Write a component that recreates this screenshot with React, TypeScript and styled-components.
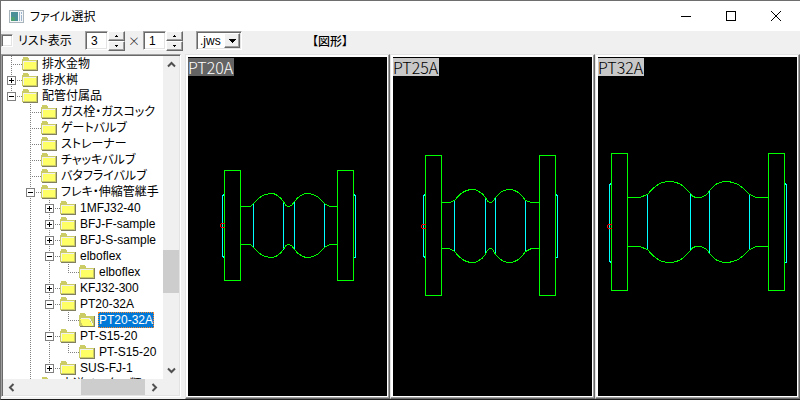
import React from "react";
import styled, { createGlobalStyle, css } from "styled-components";

const Global = createGlobalStyle`
  * { box-sizing: border-box; }
  body { margin: 0; background: #1e1e1e; }
  body, button, input, select {
    font-family: "Liberation Sans", "Noto Sans CJK JP", sans-serif;
    font-size: 12px;
    color: #000;
  }
  button { padding: 0; border: 0; }
`;

const Window = styled.main`
  display: grid;
  grid-template-rows: 30px 23px minmax(0, 1fr);
  height: 100vh;
  border: 1px solid #6e6e6e;
  border-right: 0;
  border-bottom-color: #1e1e1e;
  background: #f0f0f0;
  overflow: hidden;
`;

const TitleBar = styled.header`
  display: flex;
  align-items: center;
  padding: 0 2px 0 8px;
  background: #fff;
`;

const Title = styled.h1`
  flex: 1;
  margin: 0 0 0 6px;
  font: 400 12px/20px "Noto Sans CJK JP", sans-serif;
  font-feature-settings: "palt";
`;

const CaptionButton = styled.button`
  display: grid;
  place-items: center;
  width: 45px;
  height: 30px;
  background: transparent;
`;

const Toolbar = styled.div`
  display: flex;
  align-items: flex-start;
  font-feature-settings: "palt";
`;

const CheckLabel = styled.label`
  display: flex;
  align-items: center;
  gap: 5px;
  width: 84px;
  height: 16px;
  white-space: nowrap;
`;

const sunken = css`
  border: 1px solid;
  border-color: #a0a0a0 #fff #fff #a0a0a0;
  box-shadow: inset 1px 1px #696969, inset -1px -1px #e3e3e3;
`;

const raised = css`
  background: #f0f0f0;
  border: 1px solid;
  border-color: #fff #696969 #696969 #fff;
  box-shadow: inset -1px -1px #a0a0a0;
`;

const Check = styled.input`
  appearance: none;
  width: 12px;
  height: 13px;
  margin: 2px 0 0;
  background: #fff;
  ${sunken}
  &:checked { background: #0078d7; }
`;

const Spin = styled.div`
  display: flex;
  height: 20px;
`;

const NumberBox = styled.input`
  width: 23px;
  height: 19px;
  padding: 0 0 0 5px;
  background: #fff;
  ${sunken}
`;

const SpinButtons = styled.div`
  display: grid;
  grid-template-rows: 1fr 1fr;
  width: 17px;
`;

const SpinButton = styled.button`
  display: grid;
  place-items: center;
  ${raised}
`;

const Times = styled.span`
  width: 18px;
  font: 300 12px/20px "Noto Sans CJK JP", sans-serif;
  text-align: center;
`;

const Combo = styled.div`
  display: grid;
  grid-template-columns: 1fr 18px;
  width: 46px;
  height: 19px;
  margin-left: 13px;
  background: #fff;
  ${sunken}
`;

const Select = styled.select`
  grid-area: 1 / 1 / 2 / 3;
  appearance: none;
  padding: 0 0 0 3px;
  border: 0;
  background: transparent;
`;

const ComboArrow = styled.span`
  grid-area: 1 / 2;
  display: grid;
  place-items: center;
  margin: 1px;
  pointer-events: none;
  ${raised}
`;

const Caption = styled.strong`
  margin-left: 70px;
  font-weight: 500;
  line-height: 22px;
`;

const Body = styled.div`
  display: grid;
  grid-template: minmax(0, 1fr) / 180px minmax(0, 1fr);
  column-gap: 4px;
  min-height: 0;
`;

const TreePane = styled.nav`
  display: grid;
  grid-template: minmax(0, 1fr) 16px / minmax(0, 1fr) 16px;
  padding: 1px;
  margin-bottom: 2px;
  background: #f0f0f0;
  ${sunken}
`;

const Tree = styled.ul`
  margin: 0;
  padding: 0;
  list-style: none;
  overflow: hidden;
  background: #fff;
`;

const Row = styled.li`
  display: flex;
  align-items: center;
  height: 16px;
  white-space: nowrap;
`;

const dotsDown = "repeating-linear-gradient(#808080 0 1px, transparent 1px 2px)";
const dotsRight = "repeating-linear-gradient(90deg, #808080 0 1px, transparent 1px 2px)";

type GuideKind = "line" | "blank" | "tee" | "elbow";

const guides: Record<GuideKind, string> = {
  line: `${dotsDown} 8px 0 / 1px 16px no-repeat`,
  blank: "none",
  tee: `${dotsDown} 8px 0 / 1px 16px no-repeat, ${dotsRight} 8px 8px / 11px 1px no-repeat`,
  elbow: `${dotsDown} 8px 0 / 1px 8px no-repeat, ${dotsRight} 8px 8px / 11px 1px no-repeat`,
};

const Guide = styled.span<{ $kind: GuideKind }>`
  flex: 0 0 19px;
  height: 16px;
  padding: 4px 0 0 4px;
  background: ${(p) => guides[p.$kind]};
`;

const Toggle = styled.button<{ $open: boolean }>`
  display: block;
  width: 9px;
  height: 9px;
  border: 1px solid #808080;
  background:
    linear-gradient(#000, #000) 1px 3px / 5px 1px no-repeat,
    linear-gradient(#000, #000) 3px 1px / 1px ${(p) => (p.$open ? "0" : "5px")} no-repeat,
    #fff;
`;

const Name = styled.span<{ $selected: boolean }>`
  margin-left: 3px;
  padding: 0 1px;
  line-height: 16px;
  font-feature-settings: "palt";
  ${(p) =>
    p.$selected &&
    css`
      color: #fff;
      background: #0078d7;
      outline: 1px dotted #ff8728;
      outline-offset: -1px;
    `}
`;

const ScrollBar = styled.div<{ $vertical?: boolean }>`
  display: flex;
  flex-direction: ${(p) => (p.$vertical ? "column" : "row")};
  background: #f0f0f0;
`;

const ScrollButton = styled.button`
  display: grid;
  place-items: center;
  flex: 0 0 17px;
  background: transparent;
`;

const Space = styled.span<{ $grow: number }>`
  flex: ${(p) => p.$grow} 1 0;
`;

const Thumb = styled.span<{ $grow: number }>`
  flex: ${(p) => p.$grow} 1 0;
  background: #cdcdcd;
`;

const Previews = styled.section`
  display: grid;
  grid-template: minmax(0, 1fr) / repeat(3, minmax(0, 1fr));
`;

const Preview = styled.figure`
  position: relative;
  display: grid;
  grid-template: minmax(0, 1fr) / minmax(0, 1fr);
  margin: 0;
  overflow: hidden;
  border: 1px solid;
  border-color: #e3e3e3 #696969 #696969 #e3e3e3;
`;

const Shade = styled.div`
  display: grid;
  grid-template: minmax(0, 1fr) / minmax(0, 1fr);
  padding: 0 1px 1px 0;
  background: #a0a0a0;
`;

const Bevel = styled.div`
  display: grid;
  place-items: center;
  place-content: center;
  overflow: hidden;
  background: #000;
  border: solid #fff;
  border-width: 2px 1px 1px 2px;
`;

const PreviewLabel = styled.figcaption<{ $selected: boolean }>`
  position: absolute;
  top: 3px;
  left: 2px;
  padding-right: 1px;
  font: 300 16px/18px "Noto Sans CJK JP", sans-serif;
  color: ${(p) => (p.$selected ? "#fff" : "#000")};
  background: ${(p) => (p.$selected ? "#646464" : "#c8c8c8")};
`;

const FolderIcon = ({ open }: { open?: boolean }) => (
  <svg width="16" height="14" viewBox="0 0 16 14" shapeRendering="crispEdges">
    <path d="M1 4V2l1-1h4l1 1v1h9v11H1z" fill="#808060" />
    <path d="M0 3V2l1-1V0h5v1l1 1v1h8v10H0z" fill="#cccc66" />
    {open ? (
      <>
        <path d="M1 6h9l4 7H4z" fill="#ffff66" />
        <path d="M1.5 5.5h9l4 7" fill="none" stroke="#f0f0f0" />
      </>
    ) : (
      <>
        <path d="M1 4h13v8H1z" fill="#ffff66" />
        <path d="M1.5 12V4.5H14" fill="none" stroke="#f0f0f0" />
      </>
    )}
  </svg>
);

const Chevron = ({ d }: { d: string }) => (
  <svg width="9" height="9" viewBox="0 0 9 9">
    <path d={d} fill="none" stroke="#505050" strokeWidth="2" />
  </svg>
);

const Triangle = ({ up }: { up?: boolean }) => (
  <svg width="5" height="3" viewBox="0 0 5 3" shapeRendering="crispEdges">
    <path d={up ? "M2 0h1v1h1v1H1V1h1z" : "M1 0h3v1H3v1H2V1H1z"} />
  </svg>
);

interface Node {
  name: string;
  guides: GuideKind[];
  toggle?: "open" | "closed";
  selected?: boolean;
}

const nodes: Node[] = [
  { name: "排水金物", guides: ["tee"] },
  { name: "排水桝", guides: ["tee"], toggle: "closed" },
  { name: "配管付属品", guides: ["elbow"], toggle: "open" },
  { name: "ガス栓・ガスコック", guides: ["blank", "tee"] },
  { name: "ゲートバルブ", guides: ["blank", "tee"] },
  { name: "ストレーナー", guides: ["blank", "tee"] },
  { name: "チャッキバルブ", guides: ["blank", "tee"] },
  { name: "バタフライバルブ", guides: ["blank", "tee"] },
  { name: "フレキ・伸縮管継手", guides: ["blank", "tee"], toggle: "open" },
  { name: "1MFJ32-40", guides: ["blank", "line", "tee"], toggle: "closed" },
  { name: "BFJ-F-sample", guides: ["blank", "line", "tee"], toggle: "closed" },
  { name: "BFJ-S-sample", guides: ["blank", "line", "tee"], toggle: "closed" },
  { name: "elboflex", guides: ["blank", "line", "tee"], toggle: "open" },
  { name: "elboflex", guides: ["blank", "line", "line", "elbow"] },
  { name: "KFJ32-300", guides: ["blank", "line", "tee"], toggle: "closed" },
  { name: "PT20-32A", guides: ["blank", "line", "tee"], toggle: "open" },
  { name: "PT20-32A", guides: ["blank", "line", "line", "elbow"], selected: true },
  { name: "PT-S15-20", guides: ["blank", "line", "tee"], toggle: "open" },
  { name: "PT-S15-20", guides: ["blank", "line", "line", "elbow"] },
  { name: "SUS-FJ-1", guides: ["blank", "line", "elbow"], toggle: "closed" },
  { name: "水道メーター類", guides: ["blank", "tee"] },
];

interface Joint {
  name: string;
  flanges: [number, number];
  flangeY: [number, number];
  faceY: [number, number];
  baseY: [number, number];
  crownY: [number, number];
  neck: number;
  ends: [number, number];
  bellows: { x: [number, number]; crown: number; y: [number, number] }[];
  originY: number;
}

const joints: Joint[] = [
  {
    name: "PT20A", flanges: [36, 149], flangeY: [113, 223], faceY: [137, 200],
    baseY: [149, 187], crownY: [136, 200], neck: 100, ends: [62, 141],
    bellows: [
      { x: [65, 95], crown: 83, y: [146, 144] },
      { x: [106, 136], crown: 119, y: [144, 146] },
    ],
    originY: 168,
  },
  {
    name: "PT25A", flanges: [32, 146], flangeY: [98, 238], faceY: [137, 200],
    baseY: [145, 191], crownY: [132, 205], neck: 97, ends: [56, 138],
    bellows: [
      { x: [61, 92], crown: 79, y: [143, 140] },
      { x: [102, 132], crown: 116, y: [140, 143] },
    ],
    originY: 169,
  },
  {
    name: "PT32A", flanges: [13, 170], flangeY: [96, 233], faceY: [126, 205],
    baseY: [140, 189], crownY: [124, 205], neck: 99, ends: [41, 158],
    bellows: [
      { x: [49, 92], crown: 71, y: [137, 136] },
      { x: [111, 151], crown: 127, y: [133, 137] },
    ],
    originY: 169,
  },
];

const outline = (j: Joint, lower: boolean) => {
  const sum = j.crownY[0] + j.crownY[1];
  const at = (y: number) => (lower ? sum - y : y);
  const base = j.baseY[lower ? 1 : 0];
  const crown = j.crownY[lower ? 1 : 0];
  const [a, b] = j.bellows;
  const hump = ({ x, crown: c, y }: Joint["bellows"][number]) => {
    const l = c - x[0];
    const r = x[1] - c;
    return `L${x[0]} ${at(y[0])}
      C${x[0] + l * 0.3} ${at(y[0] - (y[0] - j.crownY[0]) * 0.6)} ${c - l * 0.45} ${crown} ${c} ${crown}
      C${c + r * 0.45} ${crown} ${x[1] - r * 0.3} ${at(y[1] - (y[1] - j.crownY[0]) * 0.6)} ${x[1]} ${at(y[1])}`;
  };
  return `M${j.flanges[0] + 16} ${base}H${j.ends[0]}${hump(a)}
    Q${a.x[1] + 2} ${base} ${j.neck} ${base}
    Q${b.x[0] - 3} ${base} ${b.x[0]} ${at(b.y[0])}
    ${hump(b)}L${j.ends[1]} ${base}H${j.flanges[1]}`;
};

const JointDrawing = ({ joint: j }: { joint: Joint }) => {
  const [top, bottom] = j.faceY;
  const [l, r] = j.flanges;
  const sum = j.crownY[0] + j.crownY[1];
  return (
    <svg width="199" height="339" viewBox="-0.5 -0.5 199 339" fill="none" shapeRendering="crispEdges">
      <g stroke="#00ffff">
        <path d={`M${l} ${top}l-2 1V${bottom - 1}l2 1`} />
        <path d={`M${r + 16} ${top}l2 1V${bottom}h-2`} />
        {j.bellows.flatMap((b) =>
          b.x.map((x, i) => <path key={x} d={`M${x} ${b.y[i]}V${sum - b.y[i]}`} />)
        )}
      </g>
      <g stroke="#00ff00">
        {j.flanges.map((x) => (
          <rect key={x} x={x} y={j.flangeY[0]} width="16" height={j.flangeY[1] - j.flangeY[0]} />
        ))}
        <path d={outline(j, false)} />
        <path d={outline(j, true)} />
      </g>
      <path d={`M${l} ${j.originY - 2}h-3l-1 1v2l1 1h3`} stroke="#ff0000" />
    </svg>
  );
};

const SpinField = ({ label, value }: { label: string; value: string }) => (
  <Spin>
    <NumberBox aria-label={label} defaultValue={value} />
    <SpinButtons>
      <SpinButton aria-label={`${label} +`}><Triangle up /></SpinButton>
      <SpinButton aria-label={`${label} -`}><Triangle /></SpinButton>
    </SpinButtons>
  </Spin>
);

export default function App() {
  return (
    <>
      <Global />
      <Window>
        <TitleBar>
          <svg width="15" height="13" viewBox="0 0 15 13" shapeRendering="crispEdges">
            <path d="M0 0h15v13H0z" fill="#a9b4bc" />
            <path d="M1 1h13v11H1z" fill="#f4f6f8" />
            <path d="M2 2h7v9H2z" fill="#4a8f98" />
            <path d="M2 7h4v4H2z" fill="#4e9f72" />
            <path d="M10 2h1v9h-1zM12 2h1v2h-1zM12 5h1v6h-1z" fill="#9bb4cc" />
          </svg>
          <Title>ファイル選択</Title>
          <CaptionButton aria-label="最小化">
            <svg width="10" height="10" shapeRendering="crispEdges"><path d="M0 5.5h10" stroke="#000" /></svg>
          </CaptionButton>
          <CaptionButton aria-label="最大化">
            <svg width="10" height="10" shapeRendering="crispEdges"><path d="M.5.5h9v9h-9z" fill="none" stroke="#000" /></svg>
          </CaptionButton>
          <CaptionButton aria-label="閉じる">
            <svg width="10" height="10"><path d="M0 0l10 10M10 0L0 10" stroke="#000" /></svg>
          </CaptionButton>
        </TitleBar>

        <Toolbar>
          <CheckLabel><Check type="checkbox" />リスト表示</CheckLabel>
          <SpinField label="列" value="3" />
          <Times>×</Times>
          <SpinField label="行" value="1" />
          <Combo>
            <Select aria-label="拡張子" defaultValue=".jws">
              <option>.jws</option>
            </Select>
            <ComboArrow>
              <svg width="7" height="4" shapeRendering="crispEdges"><path d="M0 0h7v1H6v1H5v1H4v1H3V3H2V2H1V1H0z" /></svg>
            </ComboArrow>
          </Combo>
          <Caption>【図形】</Caption>
        </Toolbar>

        <Body>
          <TreePane>
            <Tree>
              {nodes.map((n, i) => (
                <Row key={i}>
                  {n.guides.map((g, k) => (
                    <Guide key={k} $kind={g}>
                      {n.toggle && k === n.guides.length - 1 && (
                        <Toggle $open={n.toggle === "open"} aria-label={n.name} aria-expanded={n.toggle === "open"} />
                      )}
                    </Guide>
                  ))}
                  <FolderIcon open={n.selected} />
                  <Name $selected={!!n.selected}>{n.name}</Name>
                </Row>
              ))}
            </Tree>
            <ScrollBar $vertical>
              <ScrollButton aria-label="上へ"><Chevron d="M1 6.5l3.5-3.5L8 6.5" /></ScrollButton>
              <Space $grow={176} /><Thumb $grow={43} /><Space $grow={69} />
              <ScrollButton aria-label="下へ"><Chevron d="M1 2.5l3.5 3.5L8 2.5" /></ScrollButton>
            </ScrollBar>
            <ScrollBar>
              <ScrollButton aria-label="左へ"><Chevron d="M6.5 1L3 4.5 6.5 8" /></ScrollButton>
              <Space $grow={61} /><Thumb $grow={64} /><Space $grow={1} />
              <ScrollButton aria-label="右へ"><Chevron d="M2.5 1L6 4.5 2.5 8" /></ScrollButton>
            </ScrollBar>
          </TreePane>

          <Previews>
            {joints.map((j, i) => (
              <Preview key={j.name}>
                <Shade>
                  <Bevel><JointDrawing joint={j} /></Bevel>
                </Shade>
                <PreviewLabel $selected={i === 0}>{j.name}</PreviewLabel>
              </Preview>
            ))}
          </Previews>
        </Body>
      </Window>
    </>
  );
}
